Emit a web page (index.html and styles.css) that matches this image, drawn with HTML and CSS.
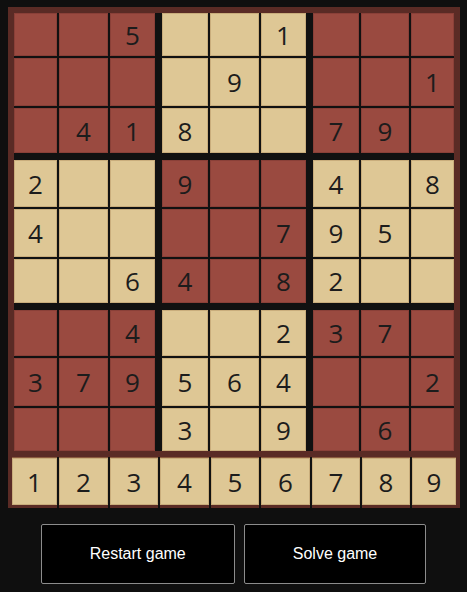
FILE: index.html
```html
<!DOCTYPE html>
<html>
<head>
<meta charset="utf-8">
<link rel="stylesheet" href="styles.css">
</head>
<body>
<div class="frame">
  <div class="board">
    <div class="box red">
      <div class="cell"></div><div class="cell"></div><div class="cell">5</div>
      <div class="cell"></div><div class="cell"></div><div class="cell"></div>
      <div class="cell"></div><div class="cell">4</div><div class="cell">1</div>
    </div>
    <div class="box tan">
      <div class="cell"></div><div class="cell"></div><div class="cell">1</div>
      <div class="cell"></div><div class="cell">9</div><div class="cell"></div>
      <div class="cell">8</div><div class="cell"></div><div class="cell"></div>
    </div>
    <div class="box red">
      <div class="cell"></div><div class="cell"></div><div class="cell"></div>
      <div class="cell"></div><div class="cell"></div><div class="cell">1</div>
      <div class="cell">7</div><div class="cell">9</div><div class="cell"></div>
    </div>
    <div class="box tan">
      <div class="cell">2</div><div class="cell"></div><div class="cell"></div>
      <div class="cell">4</div><div class="cell"></div><div class="cell"></div>
      <div class="cell"></div><div class="cell"></div><div class="cell">6</div>
    </div>
    <div class="box red">
      <div class="cell">9</div><div class="cell"></div><div class="cell"></div>
      <div class="cell"></div><div class="cell"></div><div class="cell">7</div>
      <div class="cell">4</div><div class="cell"></div><div class="cell">8</div>
    </div>
    <div class="box tan">
      <div class="cell">4</div><div class="cell"></div><div class="cell">8</div>
      <div class="cell">9</div><div class="cell">5</div><div class="cell"></div>
      <div class="cell">2</div><div class="cell"></div><div class="cell"></div>
    </div>
    <div class="box red">
      <div class="cell"></div><div class="cell"></div><div class="cell">4</div>
      <div class="cell">3</div><div class="cell">7</div><div class="cell">9</div>
      <div class="cell"></div><div class="cell"></div><div class="cell"></div>
    </div>
    <div class="box tan">
      <div class="cell"></div><div class="cell"></div><div class="cell">2</div>
      <div class="cell">5</div><div class="cell">6</div><div class="cell">4</div>
      <div class="cell">3</div><div class="cell"></div><div class="cell">9</div>
    </div>
    <div class="box red">
      <div class="cell">3</div><div class="cell">7</div><div class="cell"></div>
      <div class="cell"></div><div class="cell"></div><div class="cell">2</div>
      <div class="cell"></div><div class="cell">6</div><div class="cell"></div>
    </div>
  </div>
  <div class="palette">
    <div class="pick">1</div><div class="pick">2</div><div class="pick">3</div>
    <div class="pick">4</div><div class="pick">5</div><div class="pick">6</div>
    <div class="pick">7</div><div class="pick">8</div><div class="pick">9</div>
  </div>
</div>
<div class="actions">
  <button class="btn">Restart game</button>
  <button class="btn">Solve game</button>
</div>
</body>
</html>
```

FILE: styles.css
```css
html, body {
  background: #0f0f0f;
}
body {
  margin: 0;
  padding: 7px 0 0 8px;
}
.frame {
  width: 452px;
  box-sizing: border-box;
  background: #5a2b25;
  padding: 6px 6px 0 6px;
}
.board {
  display: grid;
  grid-template-columns: 141px 144px 141px;
  grid-template-rows: 140px 143px 141px;
  gap: 7px;
  background: #111;
}
.box {
  display: grid;
  gap: 2px;
  background: #111;
}
.box:nth-child(3n+1) { grid-template-columns: 43px 49px 45px; }
.box:nth-child(3n+2) { grid-template-columns: 46px 49px 45px; }
.box:nth-child(3n)   { grid-template-columns: 46px 48px 43px; }
.box:nth-child(-n+3) { grid-template-rows: 43px 48px 45px; }
.box:nth-child(n+4):nth-child(-n+6) { grid-template-rows: 47px 48px 44px; }
.box:nth-child(n+7) { grid-template-rows: 46px 48px 43px; }

.cell, .pick {
  display: flex;
  align-items: center;
  justify-content: center;
  font-family: "Open Sans", sans-serif;
  font-size: 26px;
  color: #1c1c1c;
}
.red .cell {
  background: #9a4a40;
  box-shadow: inset 0 0 0 1px #8a4038;
}
.tan .cell {
  background: #dec795;
  box-shadow: inset 0 0 0 1px #c9ad7c;
}
.palette {
  display: grid;
  grid-template-columns: 45px 49px 48px 49px 48px 49px 48px 48px 44px;
  gap: 2px;
  background: #111;
  margin: 6px -2px 0 -2px;
  height: 51px;
}
.pick {
  background: #dec795;
  border-top: 1px solid #8a5a3e;
  border-bottom: 3px solid #5a2b25;
  box-shadow: inset 0 0 0 1px #c9ad7c;
}
.actions {
  display: flex;
  justify-content: center;
  gap: 9px;
  margin-top: 16px;
  margin-left: -8px;
}
.btn {
  background: #000;
  color: #fff;
  border: 1px solid #8c8c8c;
  border-radius: 2px;
  font-family: "Liberation Sans", Arial, sans-serif;
  font-size: 16px;
  line-height: 18px;
  padding: 20px 48px;
}
```
